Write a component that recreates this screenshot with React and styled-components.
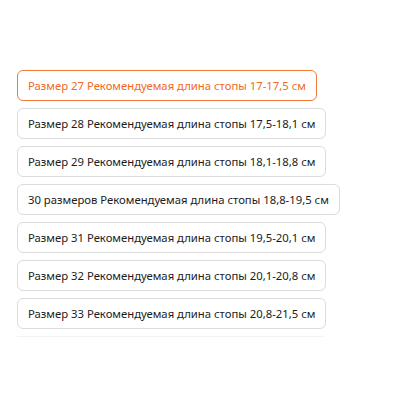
import React, { useState } from "react";
import styled, { createGlobalStyle } from "styled-components";

const GlobalStyle = createGlobalStyle`
  body {
    margin: 0;
    background: #fff;
    font-family: "Noto Sans", "Open Sans", sans-serif;
  }
`;

const sizes = [
  "Размер 27 Рекомендуемая длина стопы 17-17,5 см",
  "Размер 28 Рекомендуемая длина стопы 17,5-18,1 см",
  "Размер 29 Рекомендуемая длина стопы 18,1-18,8 см",
  "30 размеров Рекомендуемая длина стопы 18,8-19,5 см",
  "Размер 31 Рекомендуемая длина стопы 19,5-20,1 см",
  "Размер 32 Рекомендуемая длина стопы 20,1-20,8 см",
  "Размер 33 Рекомендуемая длина стопы 20,8-21,5 см",
];

const Page = styled.div`
  padding: 70px 0 0 17px;
`;

const List = styled.div`
  display: flex;
  flex-direction: column;
  align-items: flex-start;
  gap: 7px;
  width: 306px;
  padding-bottom: 7px;
  border-bottom: 1px solid #f2f2f2;
`;

const Option = styled.button`
  box-sizing: border-box;
  height: 31px;
  padding: 0 10px;
  border: 1px solid ${(p) => (p.$active ? "#f07a3c" : "#dcdcdc")};
  border-radius: 6px;
  background: #fff;
  color: ${(p) => (p.$active ? "#ee6a26" : "#1c1c1c")};
  font-family: inherit;
  font-size: 11.3px;
  white-space: nowrap;
  cursor: pointer;
`;

const App = () => {
  const [active, setActive] = useState(0);
  return (
    <>
      <GlobalStyle />
      <Page>
        <List>
          {sizes.map((s, i) => (
            <Option key={i} $active={active === i} onClick={() => setActive(i)}>
              {s}
            </Option>
          ))}
        </List>
      </Page>
    </>
  );
};

export default App;
